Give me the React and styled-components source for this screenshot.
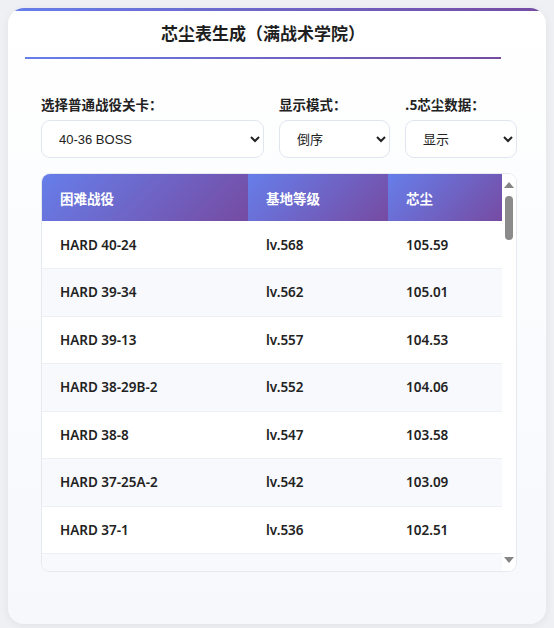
import React, { Component } from 'react';
import styled, { createGlobalStyle } from 'styled-components';

const GlobalStyle = createGlobalStyle`
    html, body {
        margin: 0;
        padding: 0;
        background: #eef0f3;
    }
    body {
        padding: 8px;
        font-family: "Noto Sans", "Noto Sans CJK SC", sans-serif;
        color: #222;
    }
`;

const Card = styled.div`
    position: relative;
    width: 538px;
    height: 616px;
    box-sizing: border-box;
    border-radius: 16px;
    overflow: hidden;
    background: linear-gradient(180deg, #ffffff 0%, #f6f8fc 100%);
    box-shadow: 0 2px 10px rgba(0, 0, 0, 0.06);
    padding-left: 17px;

    &::before {
        content: "";
        position: absolute;
        top: 0;
        left: 0;
        right: 0;
        height: 3px;
        background: linear-gradient(90deg, #667eea, #764ba2);
    }
`;

const Header = styled.div`
    width: 476px;
    height: 49px;
    display: flex;
    align-items: center;
    justify-content: center;
    border-bottom: 2px solid transparent;
    border-image: linear-gradient(90deg, #667eea, #764ba2) 1;
`;

const Title = styled.h1`
    margin: 0;
    font-family: "Noto Sans CJK SC", sans-serif;
    font-size: 17px;
    font-weight: 700;
    color: #1e1e1e;
`;

const Body = styled.div`
    width: 476px;
    margin-left: 16px;
`;

const Controls = styled.div`
    display: flex;
    gap: 15px;
    margin-top: 35px;
`;

const Field = styled.div`
    display: flex;
    flex-direction: column;
    width: ${props => props.$w}px;
`;

const Label = styled.label`
    font-family: "Noto Sans CJK SC", sans-serif;
    font-size: 13.5px;
    font-weight: 700;
    color: #222;
    height: 20px;
    line-height: 20px;
    margin-bottom: 6px;
`;

const Select = styled.select`
    height: 38px;
    width: 100%;
    box-sizing: border-box;
    border: 1.5px solid #e0e5f0;
    border-radius: 9px;
    background: #fff;
    padding: 0 8px 0 13px;
    font-family: "Liberation Sans", "Noto Sans CJK SC", sans-serif;
    font-size: 13px;
    color: #222;
    outline: none;
`;

const TableBox = styled.div`
    margin-top: 15px;
    height: 399px;
    box-sizing: border-box;
    display: flex;
    overflow: hidden;
    border: 1px solid #e6e9f0;
    border-radius: 9px;
    background: #fff;
`;

const ScrollArea = styled.div`
    flex: 1;
    overflow-y: auto;
    scrollbar-width: none;
    &::-webkit-scrollbar {
        display: none;
    }
`;

const ScrollRail = styled.div`
    width: 14px;
    flex: none;
    display: flex;
    flex-direction: column;
    align-items: center;
    background: #fff;
    padding-top: 8px;
    box-sizing: border-box;
`;

const ArrowUp = styled.div`
    width: 0;
    height: 0;
    border-left: 5px solid transparent;
    border-right: 5px solid transparent;
    border-bottom: 6px solid #858585;
`;

const ArrowDown = styled.div`
    width: 0;
    height: 0;
    margin-top: auto;
    margin-bottom: 8px;
    border-left: 5px solid transparent;
    border-right: 5px solid transparent;
    border-top: 6px solid #858585;
`;

const Thumb = styled.div`
    width: 8px;
    height: 44px;
    margin-top: 8px;
    border-radius: 4px;
    background: #8b8b8b;
`;

const Table = styled.table`
    width: 100%;
    border-collapse: collapse;
    table-layout: fixed;
`;

const HeadCell = styled.th`
    position: sticky;
    top: 0;
    height: 47px;
    padding: 0 0 0 18px;
    text-align: left;
    background: linear-gradient(135deg, #667eea 0%, #764ba2 100%);
    color: #fff;
    font-family: "Noto Sans CJK SC", sans-serif;
    font-size: 13.5px;
    font-weight: 700;
`;

const Row = styled.tr`
    background: ${props => (props.$odd ? '#f8f9fc' : '#fff')};
`;

const Cell = styled.td`
    height: 47.5px;
    box-sizing: border-box;
    padding: 0 0 0 18px;
    border-bottom: 1px solid #eef0f5;
    font-family: "Noto Sans", sans-serif;
    font-size: 13.5px;
    font-weight: 600;
    color: #222;
    white-space: nowrap;
`;

const rows = [
    ['HARD 40-24', 'lv.568', '105.59'],
    ['HARD 39-34', 'lv.562', '105.01'],
    ['HARD 39-13', 'lv.557', '104.53'],
    ['HARD 38-29B-2', 'lv.552', '104.06'],
    ['HARD 38-8', 'lv.547', '103.58'],
    ['HARD 37-25A-2', 'lv.542', '103.09'],
    ['HARD 37-1', 'lv.536', '102.51'],
    ['HARD 36-26', 'lv.531', '102.03'],
    ['HARD 36-5', 'lv.526', '101.54'],
    ['HARD 35-28B-1', 'lv.521', '101.06'],
    ['HARD 35-7', 'lv.516', '100.57'],
];

class App extends Component {
    render() {
        return (
            <React.Fragment>
                <GlobalStyle />
                <Card>
                    <Header>
                        <Title>芯尘表生成（满战术学院）</Title>
                    </Header>
                    <Body>
                        <Controls>
                            <Field $w={223}>
                                <Label>选择普通战役关卡：</Label>
                                <Select defaultValue="40-36 BOSS">
                                    <option>40-36 BOSS</option>
                                    <option>40-35</option>
                                </Select>
                            </Field>
                            <Field $w={111}>
                                <Label>显示模式：</Label>
                                <Select defaultValue="倒序">
                                    <option>倒序</option>
                                    <option>正序</option>
                                </Select>
                            </Field>
                            <Field $w={112}>
                                <Label>.5芯尘数据：</Label>
                                <Select defaultValue="显示">
                                    <option>显示</option>
                                    <option>隐藏</option>
                                </Select>
                            </Field>
                        </Controls>
                        <TableBox>
                            <ScrollArea>
                                <Table>
                                    <colgroup>
                                        <col style={{ width: 206 }} />
                                        <col style={{ width: 140 }} />
                                        <col />
                                    </colgroup>
                                    <thead>
                                        <tr>
                                            <HeadCell>困难战役</HeadCell>
                                            <HeadCell>基地等级</HeadCell>
                                            <HeadCell>芯尘</HeadCell>
                                        </tr>
                                    </thead>
                                    <tbody>
                                        {rows.map((r, i) => (
                                            <Row key={r[0]} $odd={i % 2 === 1}>
                                                <Cell>{r[0]}</Cell>
                                                <Cell>{r[1]}</Cell>
                                                <Cell>{r[2]}</Cell>
                                            </Row>
                                        ))}
                                    </tbody>
                                </Table>
                            </ScrollArea>
                            <ScrollRail>
                                <ArrowUp />
                                <Thumb />
                                <ArrowDown />
                            </ScrollRail>
                        </TableBox>
                    </Body>
                </Card>
            </React.Fragment>
        );
    }
}

export default App;
